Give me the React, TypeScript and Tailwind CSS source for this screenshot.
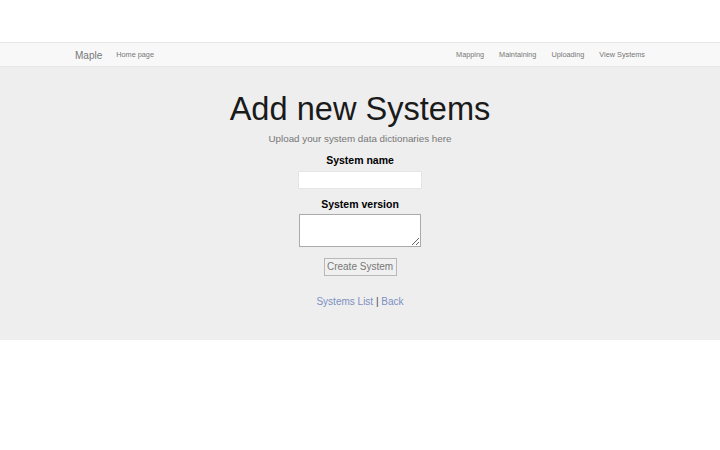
import React from 'react';

const navLinks = ['Mapping', 'Maintaining', 'Uploading', 'View Systems'];

export default function App() {
  return (
    <div className="min-h-[450px] bg-white font-['Liberation_Sans',Arial,sans-serif]">
      <div className="h-[42px]" />
      <nav className="h-[25px] border-y border-[#e7e7e7] bg-[#f8f8f8]">
        <div className="mx-auto flex h-full w-[600px] items-center justify-between pt-[1px]">
          <div className="flex items-center">
            <span className="pl-[15px] pr-[14px] text-[10px] text-[#777]">Maple</span>
            <span className="text-[7.3px] text-[#777]">Home page</span>
          </div>
          <div className="flex items-center gap-[15px] pr-[15px]">
            {navLinks.map((l) => (
              <span key={l} className="text-[7.3px] text-[#777]">{l}</span>
            ))}
          </div>
        </div>
      </nav>
      <main className="flex h-[273px] flex-col items-center bg-[#eeeeee] pt-[23px]">
        <h1 className="text-[32.6px] leading-[38px] text-[#1a1a1a]">Add new Systems</h1>
        <p className="mt-[5px] text-[9.8px] font-light leading-[12px] text-[#777]">
          Upload your system data dictionaries here
        </p>
        <label className="mt-[9px] text-[10.5px] font-bold leading-[12px] text-black">System name</label>
        <input
          type="text"
          className="mt-[5px] h-[18px] w-[124px] border border-[#e4e4e4] bg-white outline-none"
        />
        <label className="mt-[9px] text-[10.5px] font-bold leading-[12px] text-black">System version</label>
        <textarea className="mt-[4px] h-[33px] w-[122px] border border-[#aaaaaa] bg-white outline-none" />
        <button className="mt-[11px] h-[18px] w-[73px] border border-[#b8b8b8] bg-[#f0f0f0] text-[10px] leading-[16px] text-[#777]">
          Create System
        </button>
        <div className="mt-[19px] text-[10px] leading-[14px] text-[#7d8fc2]">
          <a>Systems List</a>
          <span className="text-[#444]"> | </span>
          <a>Back</a>
        </div>
      </main>
    </div>
  );
}
